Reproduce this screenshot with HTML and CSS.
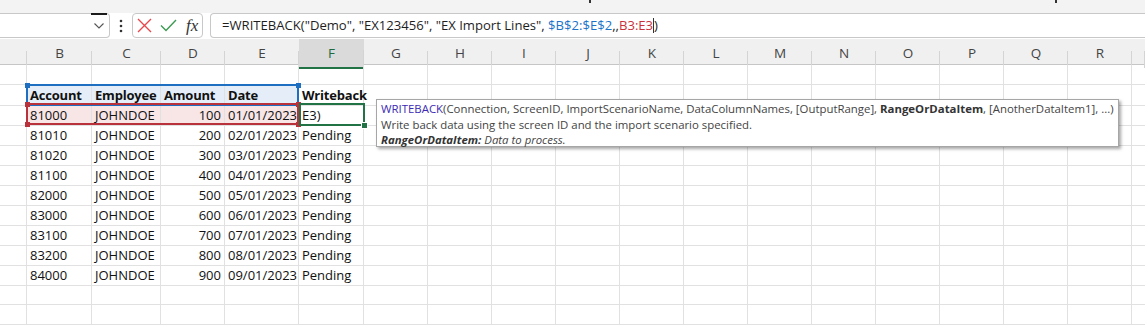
FILE: index.html
```html
<!DOCTYPE html>
<html lang="en">
<head>
  <meta charset="UTF-8">
  <meta name="viewport" content="width=device-width, initial-scale=1.0">
  <title>WRITEBACK formula</title>
  <link rel="stylesheet" href="styles.css">
</head>
<body>
  <div class="ribbon-edge">
    <span class="tick tick-one"></span>
    <span class="tick tick-two"></span>
  </div>

  <div class="formula-bar">
    <div class="name-box">
      <div class="dropdown">
        <svg width="10" height="6" viewBox="0 0 10 6"><path d="M0.5 0.5 L5 5 L9.5 0.5" fill="none" stroke="#555" stroke-width="1.1"/></svg>
      </div>
    </div>
    <div class="more-dots">
      <svg width="4" height="14" viewBox="0 0 4 14"><circle cx="2" cy="2" r="1.3" fill="#333"/><circle cx="2" cy="7" r="1.3" fill="#333"/><circle cx="2" cy="12" r="1.3" fill="#333"/></svg>
    </div>
    <div class="fx-box">
      <svg class="btn-cancel" width="15" height="15" viewBox="0 0 15 15"><path d="M1 1 L14 14 M14 1 L1 14" stroke="#e5484d" stroke-width="1.4" fill="none"/></svg>
      <svg class="btn-enter" width="17" height="13" viewBox="0 0 17 13"><path d="M1 6.5 L6 11.5 L16 1" stroke="#3c9a52" stroke-width="1.4" fill="none"/></svg>
      <span class="fx">fx</span>
    </div>
    <div class="formula-input">
      =WRITEBACK("Demo", "EX123456", "EX Import Lines", <span class="ref-blue">$B$2:$E$2</span>,,<span class="ref-red">B3:E3</span><span class="caret"></span>)
    </div>
  </div>

  <div class="sheet">
    <div class="col-heads">
      <div class="ch"></div>
      <div class="ch">B</div>
      <div class="ch">C</div>
      <div class="ch">D</div>
      <div class="ch">E</div>
      <div class="ch active">F</div>
      <div class="ch">G</div>
      <div class="ch">H</div>
      <div class="ch">I</div>
      <div class="ch">J</div>
      <div class="ch">K</div>
      <div class="ch">L</div>
      <div class="ch">M</div>
      <div class="ch">N</div>
      <div class="ch">O</div>
      <div class="ch">P</div>
      <div class="ch">Q</div>
      <div class="ch">R</div>
      <div class="ch"></div>
    </div>

    <div class="row"><div class="c"></div><div class="c"></div><div class="c"></div><div class="c"></div><div class="c"></div><div class="c"></div><div class="rest"></div></div>
    <div class="row head-row"><div class="c"></div><div class="c hl-blue">Account</div><div class="c hl-blue">Employee</div><div class="c hl-blue">Amount</div><div class="c hl-blue">Date</div><div class="c">Writeback</div><div class="rest"></div></div>
    <div class="row"><div class="c"></div><div class="c hl-red">81000</div><div class="c hl-red">JOHNDOE</div><div class="c hl-red num">100</div><div class="c hl-red num">01/01/2023</div><div class="c">E3)</div><div class="rest"></div></div>
    <div class="row"><div class="c"></div><div class="c">81010</div><div class="c">JOHNDOE</div><div class="c num">200</div><div class="c num">02/01/2023</div><div class="c">Pending</div><div class="rest"></div></div>
    <div class="row"><div class="c"></div><div class="c">81020</div><div class="c">JOHNDOE</div><div class="c num">300</div><div class="c num">03/01/2023</div><div class="c">Pending</div><div class="rest"></div></div>
    <div class="row"><div class="c"></div><div class="c">81100</div><div class="c">JOHNDOE</div><div class="c num">400</div><div class="c num">04/01/2023</div><div class="c">Pending</div><div class="rest"></div></div>
    <div class="row"><div class="c"></div><div class="c">82000</div><div class="c">JOHNDOE</div><div class="c num">500</div><div class="c num">05/01/2023</div><div class="c">Pending</div><div class="rest"></div></div>
    <div class="row"><div class="c"></div><div class="c">83000</div><div class="c">JOHNDOE</div><div class="c num">600</div><div class="c num">06/01/2023</div><div class="c">Pending</div><div class="rest"></div></div>
    <div class="row"><div class="c"></div><div class="c">83100</div><div class="c">JOHNDOE</div><div class="c num">700</div><div class="c num">07/01/2023</div><div class="c">Pending</div><div class="rest"></div></div>
    <div class="row"><div class="c"></div><div class="c">83200</div><div class="c">JOHNDOE</div><div class="c num">800</div><div class="c num">08/01/2023</div><div class="c">Pending</div><div class="rest"></div></div>
    <div class="row"><div class="c"></div><div class="c">84000</div><div class="c">JOHNDOE</div><div class="c num">900</div><div class="c num">09/01/2023</div><div class="c">Pending</div><div class="rest"></div></div>
    <div class="row"><div class="c"></div><div class="c"></div><div class="c"></div><div class="c"></div><div class="c"></div><div class="c"></div><div class="rest"></div></div>
    <div class="row"><div class="c"></div><div class="c"></div><div class="c"></div><div class="c"></div><div class="c"></div><div class="c"></div><div class="rest"></div></div>

    <!-- range highlights drawn over the cells -->
    <div class="range range-blue"></div>
    <div class="range range-red"></div>
    <div class="handle blue" style="left: 25px; top: 44px;"></div>
    <div class="handle blue" style="left: 296px; top: 44px;"></div>
    <div class="handle red" style="left: 25px; top: 63px;"></div>
    <div class="handle red" style="left: 296px; top: 63px;"></div>
    <div class="handle red" style="left: 25px; top: 83px;"></div>
    <div class="handle red" style="left: 296px; top: 83px;"></div>
    <div class="active-cell"></div>
    <div class="handle green" style="left: 361px; top: 83px;"></div>

    <div class="tooltip">
      <div><span class="fn-name">WRITEBACK</span>(Connection, ScreenID, ImportScenarioName, DataColumnNames, [OutputRange], <b>RangeOrDataItem</b>, [AnotherDataItem1], ...)</div>
      <div>Write back data using the screen ID and the import scenario specified.</div>
      <div class="arg-help"><b>RangeOrDataItem:</b> Data to process.</div>
    </div>
  </div>
</body>
</html>
```

FILE: styles.css
```css
body {
  margin: 0;
  height: 326px;
  background-color: #fff;
  font-family: "Open Sans", "Noto Sans", sans-serif;
  overflow: hidden;
}

/* top of the window */
.ribbon-edge {
  height: 13px;
  background-color: #f3f3f3;
  display: flex;
  align-items: flex-start;
}

.tick {
  width: 2px;
  height: 3px;
  background-color: #333;
}

.tick-one {
  margin-left: 589px;
}

.tick-two {
  margin-left: 464px;
}

/* formula bar */
.formula-bar {
  height: 26px;
  display: flex;
  align-items: flex-start;
  background-color: #fff;
}

.name-box {
  width: 110px;
  height: 25px;
  box-sizing: border-box;
  border: 1px solid #c8c8c8;
  border-left: none;
  border-radius: 0 4px 4px 0;
  display: flex;
  justify-content: flex-end;
}

.dropdown {
  width: 16px;
  margin-top: -1px;
  margin-right: 2px;
  border-top: 2px solid #1b1b1b;
  display: flex;
  align-items: center;
  justify-content: center;
}

.more-dots {
  width: 22px;
  height: 25px;
  display: flex;
  align-items: center;
  justify-content: center;
}

.fx-box {
  width: 71px;
  height: 25px;
  box-sizing: border-box;
  border: 1px solid #c8c8c8;
  border-radius: 4px;
  display: flex;
  align-items: center;
  padding-left: 4px;
}

.btn-enter {
  margin-left: 8px;
}

.fx {
  margin-left: 9px;
  font-family: "Liberation Serif", serif;
  font-style: italic;
  font-size: 17px;
  color: #333;
}

.formula-input {
  flex: 1;
  height: 25px;
  margin-left: 7px;
  box-sizing: border-box;
  border: 1px solid #c8c8c8;
  border-right: none;
  border-radius: 4px 0 0 4px;
  padding-left: 11px;
  font-size: 13.1px;
  line-height: 23px;
  color: #1e1e1e;
  white-space: nowrap;
}

.ref-blue {
  color: #1a73c8;
}

.ref-red {
  color: #c8313a;
}

.caret {
  display: inline-block;
  width: 1px;
  height: 15px;
  background-color: #333;
  vertical-align: -3px;
}

/* grid */
.sheet {
  position: relative;
  --cols: 27px 65px 69px 64px 74px 65px 1fr;
}

.col-heads {
  display: grid;
  grid-template-columns: 27px 65px 69px 64px 74px 65px repeat(12, 64px) 1fr;
  height: 26px;
  background-color: #f0f0f0;
  border-bottom: 1px solid #c6c6c6;
  box-sizing: border-box;
}

.ch {
  font-size: 13.5px;
  color: #444;
  text-align: center;
  line-height: 28px;
  background: linear-gradient(#d4d4d4, #d4d4d4) right bottom / 1px 17px no-repeat;
}

.ch.active {
  background-color: #dadada;
  color: #1c6b3e;
  border-bottom: 2px solid #217346;
  margin-bottom: -1px;
}

.row {
  display: grid;
  grid-template-columns: var(--cols);
  height: 20px;
}

.c {
  box-sizing: border-box;
  border-right: 1px solid #e1e1e1;
  border-bottom: 1px solid #e1e1e1;
  padding: 0 3px;
  font-size: 13px;
  line-height: 20px;
  color: #111;
  white-space: nowrap;
}

.num {
  text-align: right;
}

.head-row .c {
  font-weight: 700;
  letter-spacing: -0.2px;
}

.hl-blue {
  background-color: #e5eef8;
}

.hl-red {
  background-color: #f8e5e6;
}

.rest {
  border-bottom: 1px solid #e1e1e1;
  background: repeating-linear-gradient(to right, transparent 0 63px, #e1e1e1 63px 64px);
}

/* selections */
.range {
  position: absolute;
  left: 26px;
  width: 273px;
  height: 22px;
  box-sizing: border-box;
  border: 2px solid;
}

.range-blue {
  top: 45px;
  border-color: #1e6fc1;
}

.range-red {
  top: 64px;
  border-color: #b9323b;
}

.active-cell {
  position: absolute;
  left: 299px;
  top: 64px;
  width: 66px;
  height: 23px;
  box-sizing: border-box;
  border: 2px solid #217346;
}

.handle {
  position: absolute;
  width: 5px;
  height: 5px;
}

.handle.blue {
  background-color: #1e6fc1;
}

.handle.red {
  background-color: #b9323b;
}

.handle.green {
  background-color: #217346;
  border: 1px solid #fff;
}

/* function tooltip */
.tooltip {
  position: absolute;
  left: 376px;
  top: 60px;
  width: 743px;
  height: 48px;
  box-sizing: border-box;
  padding: 1px 4px;
  background-color: #fff;
  border: 1px solid #a6a6a6;
  box-shadow: 2px 2px 3px rgba(0, 0, 0, 0.35);
  font-size: 11.4px;
  line-height: 15.5px;
  color: #444;
  white-space: nowrap;
}

.fn-name {
  color: #3b2bb5;
}

.tooltip b {
  color: #333;
}

.arg-help {
  font-style: italic;
}
```
